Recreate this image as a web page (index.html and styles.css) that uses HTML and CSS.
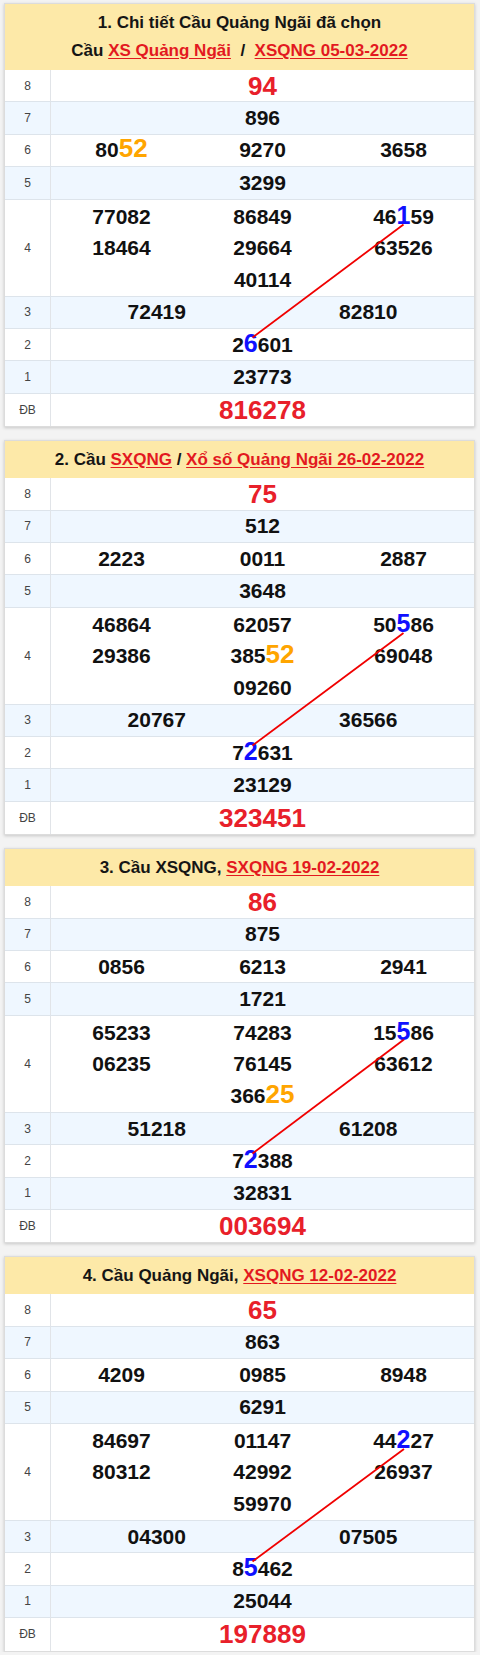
FILE: index.html
```html
<!DOCTYPE html>
<html lang="vi">
<head>
<meta charset="utf-8">
<title>Cầu Quảng Ngãi</title>
<link rel="stylesheet" href="styles.css">
</head>
<body>
<div class="page">

<section class="card">
  <div class="hd two">
    <div>1. Chi tiết Cầu Quảng Ngãi đã chọn</div>
    <div>Cầu <a href="#">XS Quảng Ngãi</a>&nbsp; / &nbsp;<a href="#">XSQNG 05-03-2022</a></div>
  </div>
  <div class="tb">
    <div class="row"><div class="lb">8</div><div class="val c1 big"><span>94</span></div></div>
    <div class="row alt"><div class="lb">7</div><div class="val c1"><span>896</span></div></div>
    <div class="row"><div class="lb">6</div><div class="val c3"><span>80<b class="or">52</b></span><span>9270</span><span>3658</span></div></div>
    <div class="row alt"><div class="lb">5</div><div class="val c1"><span>3299</span></div></div>
    <div class="row r4"><div class="lb">4</div><div class="val c3 multi">
      <div class="col"><span>77082</span><span>18464</span></div>
      <div class="col"><span>86849</span><span>29664</span><span>40114</span></div>
      <div class="col"><span>46<b class="bl">1</b>59</span><span>63526</span></div>
    </div></div>
    <div class="row alt"><div class="lb">3</div><div class="val c2"><span>72419</span><span>82810</span></div></div>
    <div class="row"><div class="lb">2</div><div class="val c1"><span>2<b class="bl">6</b>601</span></div></div>
    <div class="row alt"><div class="lb">1</div><div class="val c1"><span>23773</span></div></div>
    <div class="row"><div class="lb">ĐB</div><div class="val c1 big"><span>816278</span></div></div>
    <svg class="link" viewBox="0 0 470 357" width="470" height="357"><line x1="398.5" y1="154.5" x2="247.5" y2="267.5"/></svg>
  </div>
</section>

<section class="card">
  <div class="hd">
    <div>2. Cầu <a href="#">SXQNG</a> / <a href="#">Xổ số Quảng Ngãi 26-02-2022</a></div>
  </div>
  <div class="tb">
    <div class="row"><div class="lb">8</div><div class="val c1 big"><span>75</span></div></div>
    <div class="row alt"><div class="lb">7</div><div class="val c1"><span>512</span></div></div>
    <div class="row"><div class="lb">6</div><div class="val c3"><span>2223</span><span>0011</span><span>2887</span></div></div>
    <div class="row alt"><div class="lb">5</div><div class="val c1"><span>3648</span></div></div>
    <div class="row r4"><div class="lb">4</div><div class="val c3 multi">
      <div class="col"><span>46864</span><span>29386</span></div>
      <div class="col"><span>62057</span><span>385<b class="or">52</b></span><span>09260</span></div>
      <div class="col"><span>50<b class="bl">5</b>86</span><span>69048</span></div>
    </div></div>
    <div class="row alt"><div class="lb">3</div><div class="val c2"><span>20767</span><span>36566</span></div></div>
    <div class="row"><div class="lb">2</div><div class="val c1"><span>7<b class="bl">2</b>631</span></div></div>
    <div class="row alt"><div class="lb">1</div><div class="val c1"><span>23129</span></div></div>
    <div class="row"><div class="lb">ĐB</div><div class="val c1 big"><span>323451</span></div></div>
    <svg class="link" viewBox="0 0 470 357" width="470" height="357"><line x1="398.5" y1="155" x2="247.5" y2="267.5"/></svg>
  </div>
</section>

<section class="card">
  <div class="hd">
    <div>3. Cầu XSQNG, <a href="#">SXQNG 19-02-2022</a></div>
  </div>
  <div class="tb">
    <div class="row"><div class="lb">8</div><div class="val c1 big"><span>86</span></div></div>
    <div class="row alt"><div class="lb">7</div><div class="val c1"><span>875</span></div></div>
    <div class="row"><div class="lb">6</div><div class="val c3"><span>0856</span><span>6213</span><span>2941</span></div></div>
    <div class="row alt"><div class="lb">5</div><div class="val c1"><span>1721</span></div></div>
    <div class="row r4"><div class="lb">4</div><div class="val c3 multi">
      <div class="col"><span>65233</span><span>06235</span></div>
      <div class="col"><span>74283</span><span>76145</span><span>366<b class="or">25</b></span></div>
      <div class="col"><span>15<b class="bl">5</b>86</span><span>63612</span></div>
    </div></div>
    <div class="row alt"><div class="lb">3</div><div class="val c2"><span>51218</span><span>61208</span></div></div>
    <div class="row"><div class="lb">2</div><div class="val c1"><span>7<b class="bl">2</b>388</span></div></div>
    <div class="row alt"><div class="lb">1</div><div class="val c1"><span>32831</span></div></div>
    <div class="row"><div class="lb">ĐB</div><div class="val c1 big"><span>003694</span></div></div>
    <svg class="link" viewBox="0 0 470 357" width="470" height="357"><line x1="399" y1="153.5" x2="247.5" y2="267.5"/></svg>
  </div>
</section>

<section class="card">
  <div class="hd">
    <div>4. Cầu Quảng Ngãi, <a href="#">XSQNG 12-02-2022</a></div>
  </div>
  <div class="tb">
    <div class="row"><div class="lb">8</div><div class="val c1 big"><span>65</span></div></div>
    <div class="row alt"><div class="lb">7</div><div class="val c1"><span>863</span></div></div>
    <div class="row"><div class="lb">6</div><div class="val c3"><span>4209</span><span>0985</span><span>8948</span></div></div>
    <div class="row alt"><div class="lb">5</div><div class="val c1"><span>6291</span></div></div>
    <div class="row r4"><div class="lb">4</div><div class="val c3 multi">
      <div class="col"><span>84697</span><span>80312</span></div>
      <div class="col"><span>01147</span><span>42992</span><span>59970</span></div>
      <div class="col"><span>44<b class="bl">2</b>27</span><span>26937</span></div>
    </div></div>
    <div class="row alt"><div class="lb">3</div><div class="val c2"><span>04300</span><span>07505</span></div></div>
    <div class="row"><div class="lb">2</div><div class="val c1"><span>8<b class="bl">5</b>462</span></div></div>
    <div class="row alt"><div class="lb">1</div><div class="val c1"><span>25044</span></div></div>
    <div class="row"><div class="lb">ĐB</div><div class="val c1 big"><span>197889</span></div></div>
    <svg class="link" viewBox="0 0 470 357" width="470" height="357"><line x1="399" y1="155" x2="247.5" y2="267.5"/></svg>
  </div>
</section>

</div>
</body>
</html>
```

FILE: styles.css
```css
* { box-sizing: border-box; }

html, body {
  margin: 0;
  padding: 0;
  background: #f3f3f3;
}

body {
  font-family: "Liberation Sans", Arial, sans-serif;
  color: #111;
}

.page {
  padding: 3px 5px 0 4px;
  display: flex;
  flex-direction: column;
  gap: 13px;
}

.card {
  background: #fff;
  border: 1px solid #dcdcdc;
  box-shadow: 0 1px 3px rgba(0, 0, 0, 0.18);
}

.hd {
  background: #fde9a8;
  text-align: center;
  font-weight: bold;
  font-size: 17px;
  line-height: 28px;
  padding: 4.5px 4px;
  color: #151515;
}

.hd.two {
  padding: 5px 4px;
}

.hd a {
  color: #e3191f;
  text-decoration: underline;
  text-underline-offset: 2px;
}

.tb {
  position: relative;
}

.row {
  display: grid;
  grid-template-columns: 46px 1fr;
  height: 32.4px;
  border-bottom: 1px solid #dde4eb;
  background: #fff;
}

.row:last-of-type {
  border-bottom: none;
}

.row.alt {
  background: #eff7ff;
}

.row.r4 {
  height: 97px;
}

.lb {
  display: flex;
  align-items: center;
  justify-content: center;
  font-size: 12px;
  color: #444;
  border-right: 1px solid #e1e4e8;
}

.val {
  display: grid;
  align-items: center;
  justify-items: center;
  font-size: 21px;
  font-weight: bold;
  color: #111;
  line-height: 30px;
}

.val.c1 { grid-template-columns: 1fr; }
.val.c2 { grid-template-columns: 1fr 1fr; }
.val.c3 { grid-template-columns: 1fr 1fr 1fr; }

.val.multi {
  align-items: start;
  padding-top: 1px;
}

.col {
  display: flex;
  flex-direction: column;
  align-items: center;
  line-height: 31.5px;
}

.val.big {
  color: #e8202a;
  font-size: 26px;
}

.or {
  color: #ffa500;
  font-size: 26px;
  line-height: 0;
}

.bl {
  color: #1010ff;
  font-size: 25px;
  line-height: 0;
}

.link {
  position: absolute;
  left: 0;
  top: 0;
  pointer-events: none;
}

.link line {
  stroke: #f00000;
  stroke-width: 1.8;
}
```
